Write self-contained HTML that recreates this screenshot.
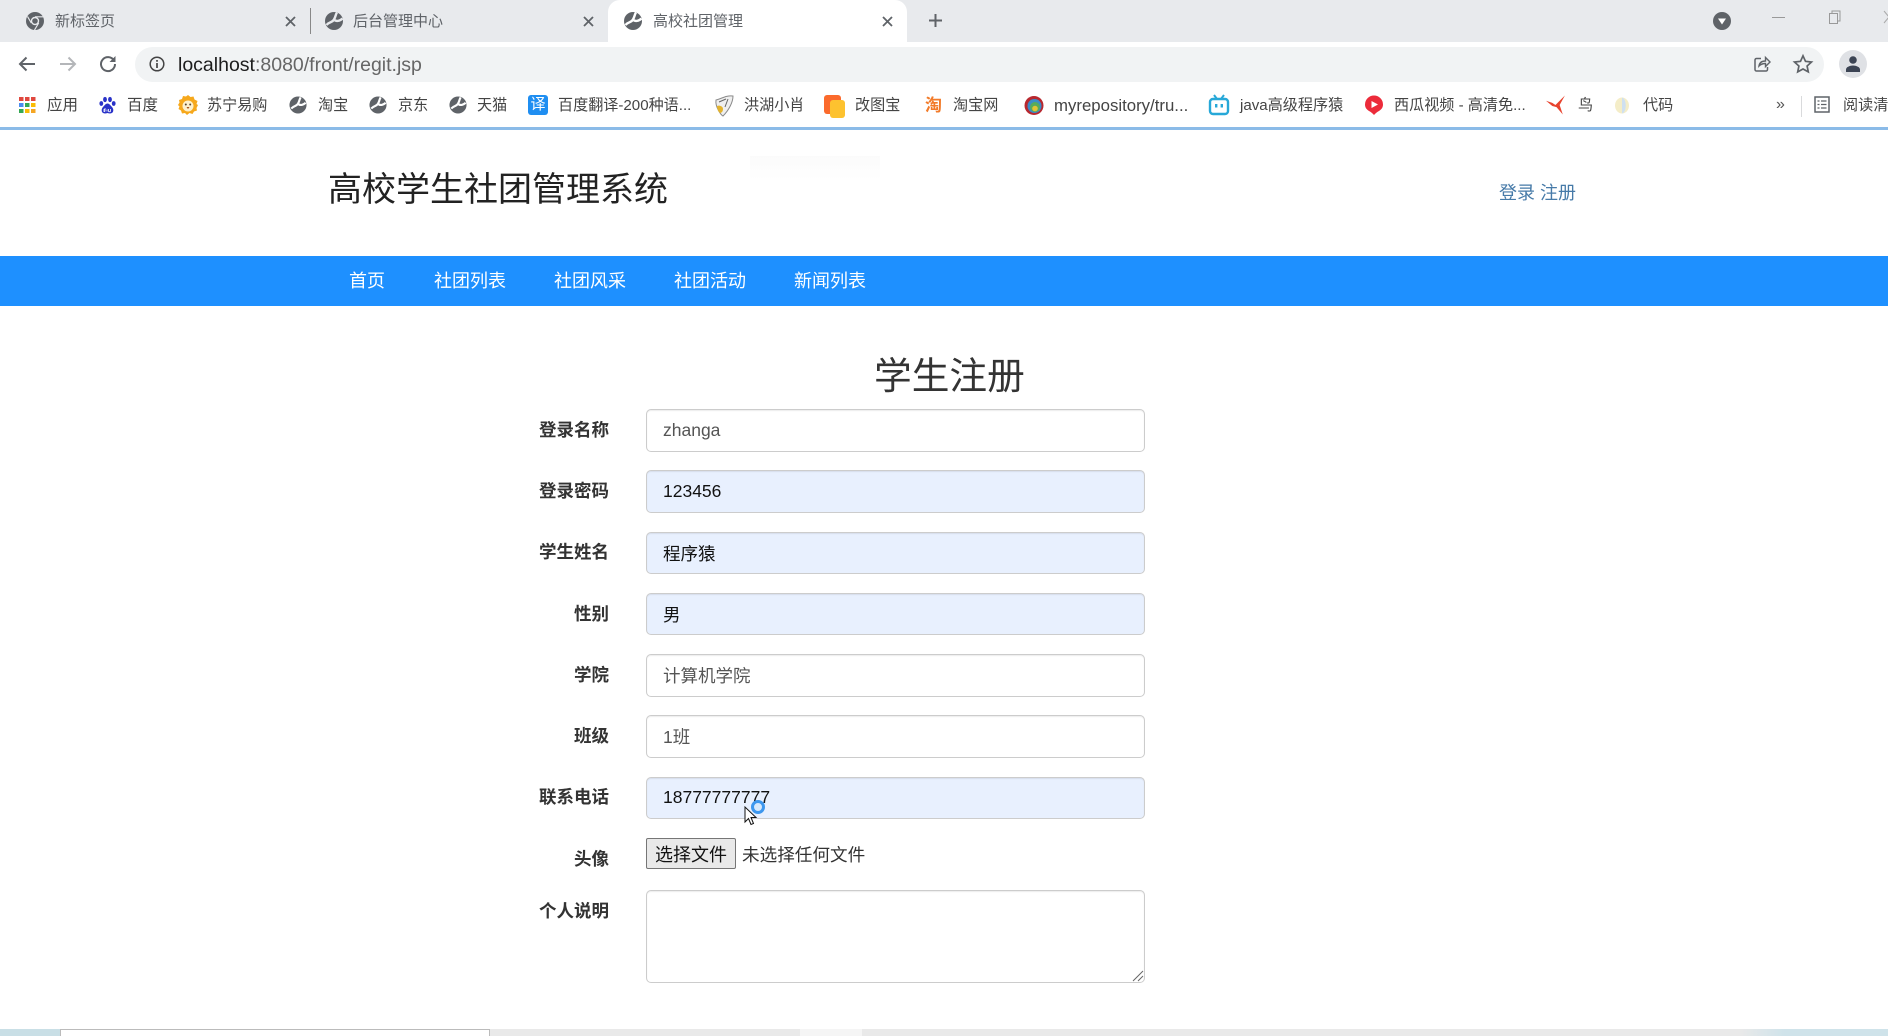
<!DOCTYPE html>
<html lang="zh-CN"><head><meta charset="utf-8"><title>高校社团管理</title>
<style>
*{box-sizing:border-box}
html,body{margin:0;padding:0;width:1888px;height:1036px;overflow:hidden;background:#fff}
body{position:relative;font-family:"Liberation Sans","Noto Sans CJK SC",sans-serif;color:#333}
.a{position:absolute;white-space:nowrap}
svg.a{overflow:visible}
.tab{font-size:15px;color:#5f6368;line-height:20px;top:12px}
.bm{font-size:15.1px;color:#444;line-height:20px;top:96px}
.nav{font-size:18px;color:#fff;line-height:24px;top:269px}
.lb{font-size:17.5px;font-weight:bold;color:#333;line-height:24px;text-align:right;left:509px;width:100px}
.in{left:646px;width:499px;border:1.5px solid #ccc;border-radius:5px;background:#fff;font-size:17.5px;color:#555;padding-left:16px;display:flex;align-items:center;box-shadow:inset 0 1px 1px rgba(0,0,0,.075)}
.af{background:#e8f0fe;color:#111}
</style></head><body>

<!-- tab strip -->
<div class="a" style="left:0;top:0;width:1888px;height:42px;background:#e8eaed"></div>
<div class="a" style="left:608px;top:0;width:299px;height:42px;background:#fff;border-radius:12px 12px 0 0"></div>
<div class="a" style="left:310px;top:8px;width:1px;height:26px;background:#888"></div>

<svg class="a" style="left:25px;top:11px" width="20" height="20" viewBox="0 0 20 20"><circle cx="10" cy="10" r="9" fill="#5f6368"/><circle cx="10" cy="10" r="4.200" fill="#e8eaed"/><circle cx="10" cy="10" r="2.800" fill="#5f6368"/><path d="M10 5.800H18.500M6.300 12L2.500 5.500M13.700 12L9.500 19" stroke="#e8eaed" stroke-width="1.200" fill="none"/></svg>
<div class="a tab" style="left:55px">新标签页</div>
<svg class="a" style="left:285px;top:16px" width="11" height="11" viewBox="0 0 11 11"><path d="M1 1L10 10M10 1L1 10" stroke="#5f6368" stroke-width="1.800"/></svg>
<svg class="a" style="left:324px;top:11px" width="20" height="20" viewBox="0 0 20 20"><circle cx="10" cy="10" r="9" fill="#5f6368"/><path d="M2.500 14C6 10 8 12 10 8.500S11.500 3.500 13 1.500M10 8.500C12 11 16 10 18.500 7.500" stroke="#e8eaed" stroke-width="2.400" fill="none"/></svg>
<div class="a tab" style="left:353px">后台管理中心</div>
<svg class="a" style="left:583px;top:16px" width="11" height="11" viewBox="0 0 11 11"><path d="M1 1L10 10M10 1L1 10" stroke="#5f6368" stroke-width="1.800"/></svg>
<svg class="a" style="left:623px;top:11px" width="20" height="20" viewBox="0 0 20 20"><circle cx="10" cy="10" r="9" fill="#5f6368"/><path d="M2.500 14C6 10 8 12 10 8.500S11.500 3.500 13 1.500M10 8.500C12 11 16 10 18.500 7.500" stroke="#fff" stroke-width="2.400" fill="none"/></svg>
<div class="a tab" style="left:653px">高校社团管理</div>
<svg class="a" style="left:882px;top:16px" width="11" height="11" viewBox="0 0 11 11"><path d="M1 1L10 10M10 1L1 10" stroke="#5f6368" stroke-width="1.800"/></svg>
<svg class="a" style="left:928px;top:13px" width="15" height="15" viewBox="0 0 15 15"><path d="M7.500 1V14M1 7.500H14" stroke="#5f6368" stroke-width="2"/></svg>
<svg class="a" style="left:1712px;top:11px" width="20" height="20" viewBox="0 0 20 20"><circle cx="10" cy="10" r="9" fill="#5f6368"/><path d="M6 7.500h8l-4 6z" fill="#fff"/></svg>
<div class="a" style="left:1772px;top:17px;width:13px;height:1px;background:#999"></div>
<svg class="a" style="left:1828px;top:10px" width="14" height="15" viewBox="0 0 14 15"><path d="M1.500 3.500h8v10h-8zM4 3.500V1h8v10H9.500" stroke="#999" fill="none"/></svg>
<svg class="a" style="left:1884px;top:11px" width="10" height="12" viewBox="0 0 10 12"><path d="M0 0L10 12M0 12L10 0" stroke="#aaa" fill="none"/></svg>

<!-- toolbar -->
<div class="a" style="left:135px;top:47px;width:1689px;height:35px;background:#f1f3f4;border-radius:18px"></div>
<svg class="a" style="left:17px;top:55px" width="20" height="18" viewBox="0 0 20 18"><path d="M18 9H3M9.500 2.500L3 9l6.500 6.500" stroke="#5f6368" stroke-width="2" fill="none"/></svg>
<svg class="a" style="left:58px;top:55px" width="20" height="18" viewBox="0 0 20 18"><path d="M2 9H17M10.500 2.500L17 9l-6.500 6.500" stroke="#b4b6b9" stroke-width="2" fill="none"/></svg>
<svg class="a" style="left:99px;top:55px" width="18" height="18" viewBox="0 0 18 18"><path d="M15 5.500A7 7 0 1 0 16 9" stroke="#5f6368" stroke-width="2" fill="none"/><path d="M16.500 1v6h-6z" fill="#5f6368"/></svg>
<svg class="a" style="left:149px;top:56px" width="16" height="16" viewBox="0 0 16 16"><circle cx="8" cy="8" r="6.800" stroke="#444" stroke-width="1.500" fill="none"/><path d="M8 7v5M8 4v1.800" stroke="#444" stroke-width="1.700"/></svg>
<div class="a" style="left:178px;top:54px;font-size:19.500px;line-height:23px;color:#666"><span style="color:#1d1d1d">localhost</span>:8080/front/regit.jsp</div>
<svg class="a" style="left:1753px;top:55px" width="18" height="18" viewBox="0 0 18 18"><path d="M8 3.500H3.500a1.500 1.500 0 0 0-1.500 1.500v9.500a1.500 1.500 0 0 0 1.500 1.500H13a1.500 1.500 0 0 0 1.500-1.500V12" stroke="#5f6368" stroke-width="1.500" fill="none"/><path d="M6 11c.5-3.500 3-5 6.500-5V2.500L17 7l-4.500 4.500V8.500C9.500 8.500 7.500 9.500 6 11z" stroke="#5f6368" stroke-width="1.400" fill="none"/></svg>
<svg class="a" style="left:1793px;top:54px" width="20" height="19" viewBox="0 0 20 19"><path d="M10 1.800l2.500 5.500 6 .7-4.400 4 1.200 5.900L10 15l-5.300 2.900 1.200-5.900-4.400-4 6-.7z" stroke="#5f6368" stroke-width="1.700" fill="none"/></svg>
<div class="a" style="left:1839px;top:50px;width:28px;height:28px;border-radius:50%;background:#dfe1e5"></div>
<svg class="a" style="left:1845px;top:55px" width="16" height="18" viewBox="0 0 16 18"><circle cx="8" cy="5" r="3.800" fill="#3c4454"/><path d="M1 17v-2.500C1 12 5 10.500 8 10.500s7 1.500 7 4V17z" fill="#3c4454"/></svg>

<!-- bookmarks -->
<svg class="a" style="left:19px;top:97px" width="17" height="16" viewBox="0 0 17 16"><g><rect x="0" y="0" width="4.500" height="4" fill="#e0483e"/><rect x="6" y="0" width="4.500" height="4" fill="#e0483e"/><rect x="12" y="0" width="4.500" height="4" fill="#e0483e"/><rect x="0" y="6" width="4.500" height="4" fill="#4a8cf0"/><rect x="6" y="6" width="4.500" height="4" fill="#34a853"/><rect x="12" y="6" width="4.500" height="4" fill="#fbbc05"/><rect x="0" y="12" width="4.500" height="4" fill="#34a853"/><rect x="6" y="12" width="4.500" height="4" fill="#fbbc05"/><rect x="12" y="12" width="4.500" height="4" fill="#f5a623"/></g></svg>
<div class="a bm" style="left:47px;font-size:15.500px">应用</div>
<svg class="a" style="left:99px;top:96px" width="17" height="19" viewBox="0 0 17 18"><g fill="#2932c8"><ellipse cx="2.300" cy="7" rx="1.900" ry="2.400"/><ellipse cx="6" cy="3" rx="1.900" ry="2.600"/><ellipse cx="11" cy="3" rx="1.900" ry="2.600"/><ellipse cx="14.700" cy="7" rx="1.900" ry="2.400"/><path d="M8.500 7c-2 0-3 2-4.500 3.500C2 12.500 2 17 6 17c1.500 0 2-.5 2.500-.5S9.500 17 11 17c4 0 4-4.500 2-6.500C11.500 9 10.500 7 8.500 7z"/></g><path d="M6 11.500v3.500M8 13v2M6 13h-1v2h1M9.500 12.500v2c0 1 2 1 2 0v-2" stroke="#fff" stroke-width=".8" fill="none"/></svg>
<div class="a bm" style="left:127px;font-size:15.500px">百度</div>
<svg class="a" style="left:178px;top:95px" width="20" height="20" viewBox="0 0 20 20"><path d="M10 0l2.500 2 3-.5 1 3 3 1.500-1 3 1.500 1-1.500 3 .5 2.500-3 1-1.500 2.500-3-1-2.500 2-2-2-3 .5-1-3-2.500-1.500 1-2.500L0 10l1.500-2.500L1 5l3-1 1-3 3 .5z" fill="#f6a81c"/><circle cx="10" cy="11" r="5.500" fill="#fdf0cc"/><circle cx="7.800" cy="9.500" r="1" fill="#543"/><circle cx="12.200" cy="9.500" r="1" fill="#543"/><path d="M8.500 12h3l-1.500 2z" fill="#a4501a"/></svg>
<div class="a bm" style="left:207px">苏宁易购</div>
<svg class="a" style="left:289px;top:96px" width="18" height="18" viewBox="0 0 20 20"><circle cx="10" cy="10" r="9.500" fill="#5f6368"/><path d="M2.500 14C6 10 8 12 10 8.500S11.500 3.500 13 1.500M10 8.500C12 11 16 10 18.500 7.500" stroke="#fff" stroke-width="2.400" fill="none"/></svg>
<div class="a bm" style="left:318px">淘宝</div>
<svg class="a" style="left:369px;top:96px" width="18" height="18" viewBox="0 0 20 20"><circle cx="10" cy="10" r="9.500" fill="#5f6368"/><path d="M2.500 14C6 10 8 12 10 8.500S11.500 3.500 13 1.500M10 8.500C12 11 16 10 18.500 7.500" stroke="#fff" stroke-width="2.400" fill="none"/></svg>
<div class="a bm" style="left:398px">京东</div>
<svg class="a" style="left:449px;top:96px" width="18" height="18" viewBox="0 0 20 20"><circle cx="10" cy="10" r="9.500" fill="#5f6368"/><path d="M2.500 14C6 10 8 12 10 8.500S11.500 3.500 13 1.500M10 8.500C12 11 16 10 18.500 7.500" stroke="#fff" stroke-width="2.400" fill="none"/></svg>
<div class="a bm" style="left:477px">天猫</div>
<div class="a" style="left:528px;top:95px;width:20px;height:20px;border-radius:3px;background:#1f8ef1;color:#fff;font-size:15px;line-height:20px;text-align:center">译</div>
<div class="a bm" style="left:558px">百度翻译-200种语...</div>
<svg class="a" style="left:713px;top:95px" width="21" height="22" viewBox="0 0 21 22"><path d="M3 5C8 4 13 0 20 1c0 6-4 14-10 20C8 20 2 12 3 5z" fill="#efefef" stroke="#8a8a8a"/><path d="M4 11c2-1 6 0 6 3s-2 4-3 4c-2-1-3-5-3-7z" fill="#e3b32e"/><path d="M6 7l7-3M15 4l-3 8" stroke="#666" fill="none"/></svg>
<div class="a bm" style="left:744px">洪湖小肖</div>
<div class="a" style="left:824px;top:95px;width:17px;height:19px;border-radius:3px;background:#fb6a2c"></div>
<div class="a" style="left:830px;top:100px;width:15px;height:18px;border-radius:3px;background:#fdc22f"></div>
<div class="a bm" style="left:855px">改图宝</div>
<div class="a" style="left:925px;top:95px;font-size:17px;line-height:21px;color:#f27b2a;font-weight:bold">淘</div>
<div class="a bm" style="left:953px">淘宝网</div>
<svg class="a" style="left:1024px;top:95px" width="20" height="21" viewBox="0 0 20 20"><circle cx="10" cy="10" r="9.500" fill="#b8282f"/><circle cx="10.500" cy="10.500" r="7" fill="#3a8cc8"/><circle cx="11" cy="11.500" r="5" fill="#58ab5a"/><circle cx="11" cy="13" r="2.800" fill="#e3c334"/></svg>
<div class="a bm" style="left:1054px;font-size:16.800px">myrepository/tru...</div>
<svg class="a" style="left:1209px;top:94px" width="20" height="21" viewBox="0 0 20 21"><rect x="1" y="5" width="18" height="15" rx="3" fill="#fff" stroke="#27a8d8" stroke-width="2.400"/><path d="M5 1l3 4M15 1l-3 4" stroke="#27a8d8" stroke-width="2"/><rect x="6" y="10" width="2.400" height="3.500" fill="#27a8d8"/><rect x="11.600" y="10" width="2.400" height="3.500" fill="#27a8d8"/></svg>
<div class="a bm" style="left:1240px">java高级程序猿</div>
<svg class="a" style="left:1364px;top:95px" width="20" height="21" viewBox="0 0 20 21"><path d="M10 20c-2-2-3-3-5-4C2 14 1 12 1 9.500a9 9 0 0 1 18 0C19 12 18 14 15 16c-2 1-3 2-5 4z" fill="#ec2b3a"/><path d="M7.500 6l6.500 3.500-6.500 3.500z" fill="#fff"/></svg>
<div class="a bm" style="left:1394px">西瓜视频 - 高清免...</div>
<svg class="a" style="left:1546px;top:94px" width="21" height="22" viewBox="0 0 20 20"><path d="M0 6l6 2 3 2 9-9-5 9 3 9-6-7-4-1z" fill="#e8432e"/></svg>
<div class="a bm" style="left:1578px">鸟</div>
<svg class="a" style="left:1614px;top:97px" width="16" height="17" viewBox="0 0 16 17"><ellipse cx="8" cy="8.500" rx="7" ry="8" fill="#f4edc8"/><path d="M8 .5C13 2 13 15 8 16.500z" fill="#cfe0f0"/></svg>
<div class="a bm" style="left:1643px">代码</div>
<div class="a" style="left:1776px;top:95px;font-size:16px;line-height:20px;color:#555">»</div>
<div class="a" style="left:1801px;top:96px;width:1px;height:21px;background:#d9dadc"></div>
<svg class="a" style="left:1814px;top:96px" width="16" height="17" viewBox="0 0 16 17"><rect x="1" y="1" width="14" height="15" fill="none" stroke="#5f6368" stroke-width="1.500"/><path d="M3.500 5h2M7 5h5.500M3.500 8.500h2M7 8.500h5.500M3.500 12h2M7 12h5.500" stroke="#5f6368" stroke-width="1.300"/></svg>
<div class="a bm" style="left:1843px">阅读清单</div>

<div class="a" style="left:0;top:127px;width:1888px;height:3px;background:#8bbbe8"></div>

<!-- page header -->
<div class="a" style="left:750px;top:156px;width:130px;height:24px;background:linear-gradient(180deg,#fbfbfb,#fff)"></div>
<div class="a" style="left:328px;top:167px;font-size:34px;line-height:46px;color:#222">高校学生社团管理系统</div>
<div class="a" style="left:1499px;top:181px;font-size:18px;line-height:24px;color:#467aa8">登录 注册</div>

<!-- nav -->
<div class="a" style="left:0;top:256px;width:1888px;height:50px;background:#1e90ff"></div>
<div class="a nav" style="left:349px">首页</div>
<div class="a nav" style="left:434px">社团列表</div>
<div class="a nav" style="left:554px">社团风采</div>
<div class="a nav" style="left:674px">社团活动</div>
<div class="a nav" style="left:794px">新闻列表</div>

<!-- form -->
<div class="a" style="left:874px;top:352px;font-size:37.700px;line-height:48px;color:#333">学生注册</div>

<div class="a lb" style="top:418px">登录名称</div>
<div class="a in" style="top:409px;height:43px">zhanga</div>
<div class="a lb" style="top:479px">登录密码</div>
<div class="a in af" style="top:470px;height:43px">123456</div>
<div class="a lb" style="top:540px">学生姓名</div>
<div class="a in af" style="top:532px;height:42px">程序猿</div>
<div class="a lb" style="top:602px">性别</div>
<div class="a in af" style="top:593px;height:42px">男</div>
<div class="a lb" style="top:663px">学院</div>
<div class="a in" style="top:654px;height:43px">计算机学院</div>
<div class="a lb" style="top:724px">班级</div>
<div class="a in" style="top:715px;height:43px">1班</div>
<div class="a lb" style="top:785px">联系电话</div>
<div class="a in af" style="top:777px;height:42px"><span style="position:relative;top:-1px">18777777777</span></div>
<div class="a lb" style="top:847px">头像</div>
<div class="a" style="left:646px;top:838px;width:90px;height:31px;border:1px solid #767676;border-radius:2px;background:#e9e9e9;font-size:18px;line-height:33px;text-align:center;color:#111">选择文件</div>
<div class="a" style="left:742px;top:843px;font-size:17.600px;line-height:24px;color:#333">未选择任何文件</div>
<div class="a lb" style="top:899px">个人说明</div>
<div class="a in" style="top:890px;height:93px"></div>
<svg class="a" style="left:1132px;top:970px" width="12" height="12" viewBox="0 0 12 12"><path d="M1 11L11 1M6 11L11 6" stroke="#666" stroke-width="1"/></svg>

<!-- cursor with busy ring -->
<svg class="a" style="left:744px;top:806px" width="14" height="20" viewBox="0 0 14 20"><path d="M1 1v15l3.500-3.500 2.500 6 2.500-1-2.500-6h5z" fill="#fff" stroke="#111" stroke-width="1"/></svg>
<svg class="a" style="left:750px;top:799px" width="16" height="16" viewBox="0 0 16 16"><circle cx="8" cy="8" r="5.500" fill="#d6e8fb" stroke="#3d97ee" stroke-width="3"/></svg>

<!-- bottom strip -->
<div class="a" style="left:0;top:1029px;width:1888px;height:7px;background:#e9e9e9"></div>
<div class="a" style="left:0;top:1029px;width:60px;height:7px;background:#c9dfe6"></div>
<div class="a" style="left:60px;top:1029px;width:430px;height:7px;background:#fff;border-top:1px solid #bbb;border-left:1px solid #bbb;border-right:1px solid #bbb"></div>
<div class="a" style="left:800px;top:1029px;width:62px;height:7px;background:#f5f5f5"></div>
<div class="a" style="left:1740px;top:1029px;width:148px;height:7px;background:linear-gradient(90deg,#e9e9e9,#cfe3ea 30%,#cfe3ea)"></div>
</body></html>
